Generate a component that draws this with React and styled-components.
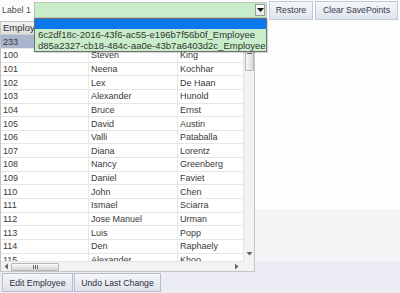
import React from "react";
import styled, { createGlobalStyle } from "styled-components";

const GlobalStyle = createGlobalStyle`
  html, body {
    margin: 0;
    padding: 0;
    background: #ffffff;
  }
  * {
    box-sizing: border-box;
  }
`;

const employees = [
  ["100", "Steven", "King"],
  ["101", "Neena", "Kochhar"],
  ["102", "Lex", "De Haan"],
  ["103", "Alexander", "Hunold"],
  ["104", "Bruce", "Ernst"],
  ["105", "David", "Austin"],
  ["106", "Valli", "Pataballa"],
  ["107", "Diana", "Lorentz"],
  ["108", "Nancy", "Greenberg"],
  ["109", "Daniel", "Faviet"],
  ["110", "John", "Chen"],
  ["111", "Ismael", "Sciarra"],
  ["112", "Jose Manuel", "Urman"],
  ["113", "Luis", "Popp"],
  ["114", "Den", "Raphaely"],
  ["115", "Alexander", "Khoo"],
];

const savePoints = [
  "6c2df18c-2016-43f6-ac55-e196b7f56b0f_Employee",
  "d85a2327-cb18-484c-aa0e-43b7a6403d2c_Employee",
];

const App = () => {
  return (
    <Page>
      <GlobalStyle />
      <Toolbar>
        <Label>Label 1</Label>
        <Combo>
          <ComboArrow>
            <svg width="7" height="4" viewBox="0 0 7 4">
              <path d="M0 0 H7 L3.5 4 Z" fill="#111" />
            </svg>
          </ComboArrow>
        </Combo>
        <ToolButton $w={44}>Restore</ToolButton>
        <ToolButton $w={83}>Clear SavePoints</ToolButton>
        <DropList>
          <DropItem $active />
          {savePoints.map((s) => (
            <DropItem key={s}>{s}</DropItem>
          ))}
        </DropList>
      </Toolbar>
      <Main>
        <Grid>
          <Viewport>
            <HeaderRow>
              <HeaderCell $w={88}>Employee Id</HeaderCell>
              <HeaderCell $w={89}>First Name</HeaderCell>
              <HeaderCell $w={90}>Last Name</HeaderCell>
            </HeaderRow>
            <Row $selected $h={14}>
              <Cell $w={88}>233</Cell>
              <Cell $w={89}></Cell>
              <Cell $w={90}></Cell>
            </Row>
            {employees.map(([id, first, last]) => (
              <Row key={id} $h={13.65}>
                <Cell $w={88}>{id}</Cell>
                <Cell $w={89}>{first}</Cell>
                <Cell $w={90}>{last}</Cell>
              </Row>
            ))}
          </Viewport>
          <VScroll>
            <VThumb>
              <Grip />
              <Grip />
              <Grip />
            </VThumb>
            <svg width="7" height="4" viewBox="0 0 7 4">
              <path d="M0.5 0 H6.5 L3.5 3.5 Z" fill="#666" />
            </svg>
          </VScroll>
          <HScroll>
            <svg width="4" height="7" viewBox="0 0 4 7">
              <path d="M4 0.5 V6.5 L0.5 3.5 Z" fill="#666" />
            </svg>
            <HThumb>
              <VGrip />
              <VGrip />
              <VGrip />
            </HThumb>
            <HSpacer />
            <svg width="4" height="7" viewBox="0 0 4 7">
              <path d="M0 0.5 V6.5 L3.5 3.5 Z" fill="#666" />
            </svg>
          </HScroll>
          <Corner />
        </Grid>
        <SidePanel>
          <Blank />
          <Dotted />
          <Lavender />
        </SidePanel>
      </Main>
      <BottomBar>
        <ActionButton $w={71}>Edit Employee</ActionButton>
        <ActionButton $w={87}>Undo Last Change</ActionButton>
      </BottomBar>
    </Page>
  );
};

const Page = styled.div`
  position: relative;
  width: 400px;
  height: 293px;
  overflow: hidden;
  display: flex;
  flex-direction: column;
  font-family: "Liberation Sans", Arial, sans-serif;
  font-size: 9px;
  color: #3a3a3a;
  background: #fdfdfd;
`;

const Toolbar = styled.div`
  position: relative;
  z-index: 2;
  height: 21px;
  display: flex;
  align-items: center;
  padding: 0 2px 1px 2px;
  background: #fcfcfc;
`;

const Label = styled.span`
  flex: none;
  width: 32px;
  color: #505050;
  font-size: 8.8px;
  white-space: nowrap;
`;

const Combo = styled.div`
  flex: none;
  width: 233px;
  height: 16px;
  display: flex;
  justify-content: flex-end;
  align-items: center;
  padding-right: 1px;
  background: #c9edcb;
  border: 1px solid #b8c8b8;
`;

const ComboArrow = styled.div`
  width: 10px;
  height: 12px;
  display: flex;
  align-items: center;
  justify-content: center;
  background: linear-gradient(#ffffff, #e6e6e6);
  border: 1px solid #9a9a9a;
`;

const ToolButton = styled.div`
  flex: none;
  width: ${(p) => p.$w}px;
  height: 19px;
  margin-left: 2px;
  display: flex;
  align-items: center;
  justify-content: center;
  white-space: nowrap;
  font-size: 8.7px;
  color: #3a3a4a;
  background: linear-gradient(#f4f6fa, #dfe4ec);
  border: 1px solid #c3c8d2;
  &:first-of-type {
    margin-left: 3px;
  }
`;

const DropList = styled.div`
  position: absolute;
  left: 34px;
  top: 18px;
  width: 233px;
  height: 34px;
  background: #c9edcb;
  border: 1px solid #6e6e6e;
  box-shadow: 1px 1px 1px rgba(0, 0, 0, 0.15);
`;

const DropItem = styled.div`
  height: ${(p) => (p.$active ? "10px" : "11px")};
  line-height: 11px;
  padding-left: 3px;
  white-space: nowrap;
  font-size: 9.5px;
  color: #2e362e;
  background: ${(p) => (p.$active ? "#0b79ee" : "transparent")};
`;

const Main = styled.div`
  display: flex;
  height: 251px;
`;

const Grid = styled.div`
  width: 255px;
  height: 251px;
  display: grid;
  grid-template-columns: 1fr 11px;
  grid-template-rows: 1fr 10px;
  border: 1px solid #c4c4c4;
  background: #ffffff;
`;

const Viewport = styled.div`
  overflow: hidden;
`;

const HeaderRow = styled.div`
  display: flex;
  height: 13px;
  background: linear-gradient(#f2f2f2, #dedede);
  border-bottom: 1px solid #cfcfcf;
`;

const HeaderCell = styled.div`
  flex: none;
  width: ${(p) => p.$w}px;
  padding-left: 2px;
  line-height: 12px;
  font-size: 9.5px;
  white-space: nowrap;
  overflow: hidden;
  color: #333;
  border-right: 1px solid #d0d0d0;
`;

const Row = styled.div`
  display: flex;
  height: ${(p) => p.$h}px;
  background: ${(p) => (p.$selected ? "#a8b5cd" : "#ffffff")};
  border-bottom: 1px solid #e6e6e6;
`;

const Cell = styled.div`
  flex: none;
  width: ${(p) => p.$w}px;
  padding-left: 2px;
  display: flex;
  align-items: center;
  white-space: nowrap;
  overflow: hidden;
  border-right: 1px solid #e8e8e8;
`;

const VScroll = styled.div`
  display: flex;
  flex-direction: column;
  justify-content: space-between;
  align-items: center;
  padding: 12px 0 5px;
  background: #f2f2f2;
  border-left: 1px solid #e4e4e4;
`;

const VThumb = styled.div`
  width: 9px;
  height: 37px;
  display: flex;
  flex-direction: column;
  justify-content: flex-end;
  align-items: center;
  gap: 1px;
  padding-bottom: 16px;
  background: linear-gradient(90deg, #fafafa, #d8d8d8);
  border: 1px solid #b8b8b8;
  border-radius: 1px;
`;

const Grip = styled.div`
  width: 5px;
  height: 1px;
  background: #666;
`;

const HScroll = styled.div`
  display: flex;
  align-items: center;
  padding: 0 4px 0 3px;
  background: #f2f2f2;
  border-top: 1px solid #e4e4e4;
`;

const HThumb = styled.div`
  width: 48px;
  height: 8px;
  margin-left: 3px;
  display: flex;
  justify-content: center;
  align-items: center;
  gap: 1px;
  background: linear-gradient(#fafafa, #d4d4d4);
  border: 1px solid #b8b8b8;
  border-radius: 1px;
`;

const VGrip = styled.div`
  width: 1px;
  height: 4px;
  background: #666;
`;

const HSpacer = styled.div`
  flex: 1;
`;

const Corner = styled.div`
  background: #f2f2f2;
`;

const SidePanel = styled.div`
  flex: 1;
  display: flex;
  flex-direction: column;
`;

const Blank = styled.div`
  flex: 1;
  background: #fdfdfd;
`;

const Dotted = styled.div`
  height: 53px;
  background: #f5f5f8;
  border-top: 1px dotted #e6e6ee;
  border-bottom: 1px dotted #e2e2ec;
`;

const Lavender = styled.div`
  height: 9px;
  background: #ececf5;
`;

const BottomBar = styled.div`
  flex: 1;
  display: flex;
  align-items: center;
  gap: 1px;
  padding: 0 2px;
  background: #ececf5;
`;

const ActionButton = styled.div`
  flex: none;
  width: ${(p) => p.$w}px;
  height: 19px;
  display: flex;
  align-items: center;
  justify-content: center;
  white-space: nowrap;
  font-size: 8.7px;
  color: #2e2e3a;
  background: linear-gradient(#f6f7fb, #dde2ea);
  border: 1px solid #b8bec9;
`;

export default App;
